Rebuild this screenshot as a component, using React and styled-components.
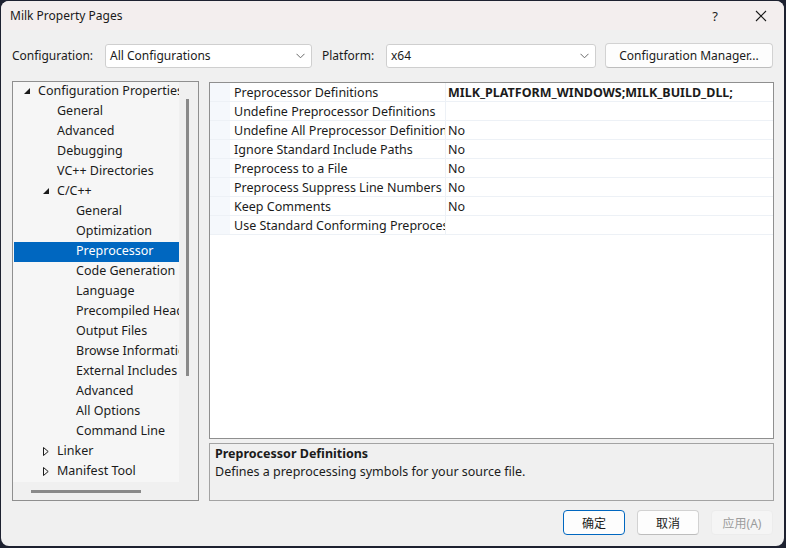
import React from 'react';
import styled, { createGlobalStyle } from 'styled-components';

const GlobalStyle = createGlobalStyle`
  html, body {
    margin: 0;
    padding: 0;
    background: #1d2130;
  }
  body {
    font-family: "Noto Sans", "Noto Sans CJK SC", sans-serif;
    font-size: 12px;
    color: #1b1b1b;
  }
`;

const treeItems = [
  { label: 'Configuration Properties', level: 0, arrow: 'open' },
  { label: 'General', level: 1 },
  { label: 'Advanced', level: 1 },
  { label: 'Debugging', level: 1 },
  { label: 'VC++ Directories', level: 1 },
  { label: 'C/C++', level: 1, arrow: 'open' },
  { label: 'General', level: 2 },
  { label: 'Optimization', level: 2 },
  { label: 'Preprocessor', level: 2, selected: true },
  { label: 'Code Generation', level: 2 },
  { label: 'Language', level: 2 },
  { label: 'Precompiled Headers', level: 2 },
  { label: 'Output Files', level: 2 },
  { label: 'Browse Information', level: 2 },
  { label: 'External Includes', level: 2 },
  { label: 'Advanced', level: 2 },
  { label: 'All Options', level: 2 },
  { label: 'Command Line', level: 2 },
  { label: 'Linker', level: 1, arrow: 'closed' },
  { label: 'Manifest Tool', level: 1, arrow: 'closed' },
];

const props = [
  { name: 'Preprocessor Definitions', value: 'MILK_PLATFORM_WINDOWS;MILK_BUILD_DLL;', bold: true },
  { name: 'Undefine Preprocessor Definitions', value: '' },
  { name: 'Undefine All Preprocessor Definitions', value: 'No' },
  { name: 'Ignore Standard Include Paths', value: 'No' },
  { name: 'Preprocess to a File', value: 'No' },
  { name: 'Preprocess Suppress Line Numbers', value: 'No' },
  { name: 'Keep Comments', value: 'No' },
  { name: 'Use Standard Conforming Preprocessor', value: '' },
];

const Window = styled.div`
  margin: 1px 0 0 1px;
  width: 783px;
  height: 545px;
  border-radius: 8px;
  overflow: hidden;
  background: #f0f0f0;
  display: flex;
  flex-direction: column;
`;

const TitleBar = styled.div`
  height: 29px;
  flex: none;
  background: #f3eeee;
  display: flex;
  align-items: center;
  justify-content: space-between;
  padding-left: 9px;
`;

const TitleText = styled.div`
  font-size: 12px;
  color: #1a1a1a;
`;

const TitleButtons = styled.div`
  display: flex;
  align-items: center;
  height: 100%;
`;

const TitleButton = styled.div`
  width: 46px;
  height: 100%;
  display: flex;
  align-items: center;
  justify-content: center;
  font-size: 13px;
  color: #1a1a1a;
`;

const Toolbar = styled.div`
  display: flex;
  align-items: center;
  padding: 13px 10px 0 11px;
  height: 25px;
`;

const Label = styled.span`
  white-space: nowrap;
  flex: none;
  width: ${p => p.$w}px;
`;

const Combo = styled.div`
  box-sizing: border-box;
  flex: none;
  width: ${p => p.$w}px;
  height: 24px;
  background: #fff;
  border: 1px solid #cfcfcf;
  border-radius: 3px;
  display: flex;
  align-items: center;
  justify-content: space-between;
  padding: 0 6px 0 4px;
  margin-right: ${p => p.$mr}px;
`;

const Button = styled.div`
  box-sizing: border-box;
  flex: none;
  height: 25px;
  width: ${p => p.$w}px;
  background: ${p => (p.$disabled ? '#f5f5f5' : '#fdfdfd')};
  border: 1px solid ${p => (p.$primary ? '#0067c0' : p.$disabled ? '#ececec' : '#d2d2d2')};
  border-bottom-color: ${p => (p.$primary ? '#0067c0' : p.$disabled ? '#ececec' : '#bdbdbd')};
  border-radius: 4px;
  display: flex;
  align-items: center;
  justify-content: center;
  color: ${p => (p.$disabled ? '#9c9c9c' : '#1b1b1b')};
  white-space: nowrap;
`;

const Main = styled.div`
  display: flex;
  gap: 10px;
  padding: 13px 10px 0 11px;
`;

const Tree = styled.div`
  box-sizing: border-box;
  width: 187px;
  height: 420px;
  border: 1px solid #8f8f8f;
  display: grid;
  grid-template-columns: 166px 1fr;
  grid-template-rows: 400px 1fr;
`;

const TreeList = styled.div`
  background: #f6f6f6;
  overflow: hidden;
`;

const TreeRow = styled.div`
  box-sizing: border-box;
  height: 20px;
  padding-bottom: 2px;
  line-height: 18px;
  display: flex;
  align-items: center;
  padding-left: ${p => 10 + p.$level * 19}px;
  margin-left: 1px;
  background: ${p => (p.$selected ? '#0067c0' : 'transparent')};
  color: ${p => (p.$selected ? '#fff' : '#1b1b1b')};
  white-space: nowrap;
  font-size: 12.5px;
`;

const Arrow = styled.span`
  width: 14px;
  flex: none;
  display: flex;
  align-items: center;
`;

const VScroll = styled.div`
  display: flex;
  justify-content: center;
  padding-top: 17px;
`;

const VThumb = styled.div`
  width: 3px;
  height: 277px;
  background: #8a8a8a;
  margin-left: -2px;
`;

const HScroll = styled.div`
  grid-column: 1 / 3;
  display: flex;
  align-items: center;
  padding-left: 18px;
`;

const HThumb = styled.div`
  width: 110px;
  height: 3px;
  background: #8a8a8a;
`;

const Right = styled.div`
  flex: 1;
  display: flex;
  flex-direction: column;
  gap: 4px;
  padding-top: 1px;
`;

const Grid = styled.div`
  box-sizing: border-box;
  height: 357px;
  border: 1px solid #8f8f8f;
  background: #fff;
`;

const PropRow = styled.div`
  display: grid;
  grid-template-columns: 20px 216px 1fr;
  height: 19px;
  border-bottom: 1px solid #edf1f6;
  box-sizing: border-box;
`;

const Gutter = styled.div`
  background: #f5f8fc;
`;

const PropName = styled.div`
  padding-left: 4px;
  display: flex;
  align-items: center;
  white-space: nowrap;
  overflow: hidden;
  border-right: 1px solid #edf1f6;
  font-size: 12.5px;
`;

const PropValue = styled.div`
  padding-left: 2px;
  display: flex;
  align-items: center;
  white-space: nowrap;
  font-weight: ${p => (p.$bold ? 700 : 400)};
  font-size: 12.5px;
`;

const Desc = styled.div`
  box-sizing: border-box;
  height: 58px;
  border: 1px solid #a3a3a3;
  padding: 1px 5px;
  line-height: 18px;
`;

const DescTitle = styled.div`
  font-weight: 700;
  font-size: 12.5px;
`;

const DescText = styled.div`
  font-size: 12.5px;
`;

const Footer = styled.div`
  display: flex;
  justify-content: flex-end;
  gap: 12px;
  padding: 9px 11px 0 0;
`;

const Chevron = () => (
  <svg width="9" height="6" viewBox="0 0 9 6">
    <path d="M0.5 0.8 L4.5 4.8 L8.5 0.8" fill="none" stroke="#6a6a6a" strokeWidth="1" />
  </svg>
);

const CloseIcon = () => (
  <svg width="12" height="12" viewBox="0 0 12 12">
    <path d="M1 1 L11 11 M11 1 L1 11" stroke="#1a1a1a" strokeWidth="1.1" />
  </svg>
);

const TreeArrow = ({ kind }) =>
  kind === 'open' ? (
    <svg width="6" height="6" viewBox="0 0 6 6">
      <path d="M6 0 L6 6 L0 6 Z" fill="#1b1b1b" />
    </svg>
  ) : (
    <svg width="6" height="9" viewBox="0 0 6 9">
      <path d="M0.5 0.5 L5.2 4.5 L0.5 8.5 Z" fill="none" stroke="#1b1b1b" strokeWidth="1" />
    </svg>
  );

export default function App() {
  return (
    <>
      <GlobalStyle />
      <Window>
        <TitleBar>
          <TitleText>Milk Property Pages</TitleText>
          <TitleButtons>
            <TitleButton>?</TitleButton>
            <TitleButton><CloseIcon /></TitleButton>
          </TitleButtons>
        </TitleBar>

        <Toolbar>
          <Label $w={93}>Configuration:</Label>
          <Combo $w={207} $mr={10}>
            <span>All Configurations</span>
            <Chevron />
          </Combo>
          <Label $w={64}>Platform:</Label>
          <Combo $w={210} $mr={9}>
            <span>x64</span>
            <Chevron />
          </Combo>
          <Button $w={168}>Configuration Manager...</Button>
        </Toolbar>

        <Main>
          <Tree>
            <TreeList>
              {treeItems.map((it, i) => (
                <TreeRow key={i} $level={it.level} $selected={it.selected}>
                  <Arrow>{it.arrow && <TreeArrow kind={it.arrow} />}</Arrow>
                  {it.label}
                </TreeRow>
              ))}
            </TreeList>
            <VScroll><VThumb /></VScroll>
            <HScroll><HThumb /></HScroll>
          </Tree>

          <Right>
            <Grid>
              {props.map((p, i) => (
                <PropRow key={i}>
                  <Gutter />
                  <PropName>{p.name}</PropName>
                  <PropValue $bold={p.bold}>{p.value}</PropValue>
                </PropRow>
              ))}
            </Grid>
            <Desc>
              <DescTitle>Preprocessor Definitions</DescTitle>
              <DescText>Defines a preprocessing symbols for your source file.</DescText>
            </Desc>
          </Right>
        </Main>

        <Footer>
          <Button $w={62} $primary>确定</Button>
          <Button $w={62}>取消</Button>
          <Button $w={62} $disabled>应用(A)</Button>
        </Footer>
      </Window>
    </>
  );
}
